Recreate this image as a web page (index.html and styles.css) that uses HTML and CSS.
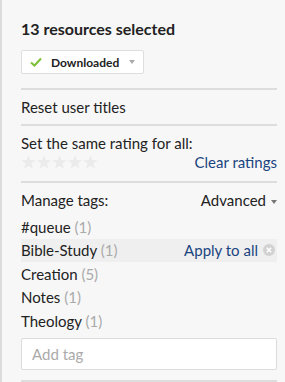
FILE: index.html
```html
<!DOCTYPE html>
<html lang="en">
<head>
    <meta charset="UTF-8">
    <title>Selection</title>
    <link rel="stylesheet" href="styles.css">
</head>
<body>
    <div class="panel">
        <h2 class="title">13 resources selected</h2>
        <button class="status-btn">
            <svg class="check" width="12" height="10" viewBox="0 0 12 10"><path d="M1 5.5 L4.5 8.5 L11 1.5" fill="none" stroke="#7cc035" stroke-width="2"/></svg>
            <span>Downloaded</span>
            <span class="caret"></span>
        </button>

        <div class="section">
            <p class="line">Reset user titles</p>
        </div>

        <div class="section">
            <p class="line">Set the same rating for all:</p>
            <div class="rating-row">
                <svg class="stars" width="78" height="16" viewBox="0 0 78 16">
                    <defs>
                        <polygon id="star" points="7.5,0.5 9.3,5.6 14.7,5.7 10.4,9 12,14.3 7.5,11.2 3,14.3 4.6,9 0.3,5.7 5.7,5.6"/>
                    </defs>
                    <use href="#star" x="0" y="0.5"/>
                    <use href="#star" x="15.5" y="0.5"/>
                    <use href="#star" x="31" y="0.5"/>
                    <use href="#star" x="46.5" y="0.5"/>
                    <use href="#star" x="62" y="0.5"/>
                </svg>
                <a class="link">Clear ratings</a>
            </div>
        </div>

        <div class="section">
            <div class="tags-head">
                <span>Manage tags:</span>
                <span class="advanced">Advanced<span class="caret dark"></span></span>
            </div>
            <ul class="tags">
                <li><span>#queue <span class="count">(1)</span></span></li>
                <li class="active">
                    <span>Bible-Study <span class="count">(1)</span></span>
                    <span class="actions">
                        <a class="link">Apply to all</a>
                        <svg width="12" height="12" viewBox="0 0 12 12"><circle cx="6" cy="6" r="6" fill="#d2d2d2"/><path d="M3.8 3.8 L8.2 8.2 M8.2 3.8 L3.8 8.2" stroke="#fff" stroke-width="1.6"/></svg>
                    </span>
                </li>
                <li><span>Creation <span class="count">(5)</span></span></li>
                <li><span>Notes <span class="count">(1)</span></span></li>
                <li><span>Theology <span class="count">(1)</span></span></li>
            </ul>
            <input class="tag-input" type="text" placeholder="Add tag">
        </div>
        <div class="section last"></div>
    </div>
</body>
</html>
```

FILE: styles.css
```css
body {
    margin: 0;
    font-family: Lato, "Liberation Sans", sans-serif;
    background-color: #f7f7f7;
    color: #222;
}
.panel {
    border-left: 2px solid #dcdcdc;
    min-height: 382px;
    padding: 20px 8px 0 19px;
    box-sizing: border-box;
}
.title {
    font-size: 16px;
    font-weight: bold;
    margin: 0 0 12px;
    line-height: 18px;
}
.status-btn {
    display: flex;
    align-items: center;
    height: 24px;
    padding: 0 8px 0 8px;
    background: #fff;
    border: 1px solid #dedede;
    border-radius: 2px;
    font-family: inherit;
    font-size: 12px;
    font-weight: bold;
    color: #222;
    margin-bottom: 14px;
}
.check {
    margin-right: 9px;
}
.caret {
    display: inline-block;
    width: 0;
    height: 0;
    border-left: 3.5px solid transparent;
    border-right: 3.5px solid transparent;
    border-top: 4px solid #aaa;
    margin-left: 10px;
    vertical-align: middle;
}
.caret.dark {
    border-top-color: #777;
    margin-left: 5px;
}
.section {
    border-top: 2px solid #dddddd;
    padding: 8px 0;
    font-size: 15px;
}
.line {
    margin: 0;
    line-height: 18px;
}
.rating-row {
    display: flex;
    justify-content: space-between;
    align-items: center;
    height: 20px;
    margin-bottom: 1px;
}
.stars {
    fill: #ebebeb;
    display: block;
}
.link {
    color: #1a4480;
}
.tags-head {
    display: flex;
    justify-content: space-between;
    line-height: 18px;
    margin-bottom: 6px;
}
.tags {
    list-style: none;
    margin: 0;
    padding: 0;
}
.tags li {
    display: flex;
    justify-content: space-between;
    align-items: center;
    height: 23.5px;
}
.tags li.active {
    background-color: #efefef;
}
.count {
    color: #aaa;
}
.actions {
    display: flex;
    align-items: center;
    gap: 5px;
    padding-right: 2px;
}
.tag-input {
    display: block;
    width: 100%;
    box-sizing: border-box;
    height: 32px;
    margin-top: 5px;
    padding: 0 10px;
    border: 1px solid #dcdcdc;
    border-radius: 2px;
    background: #fff;
    font-family: inherit;
    font-size: 15px;
}
.tag-input::placeholder {
    color: #aaa;
}
.section.last {
    padding: 0;
    margin-top: 2px;
}
```
